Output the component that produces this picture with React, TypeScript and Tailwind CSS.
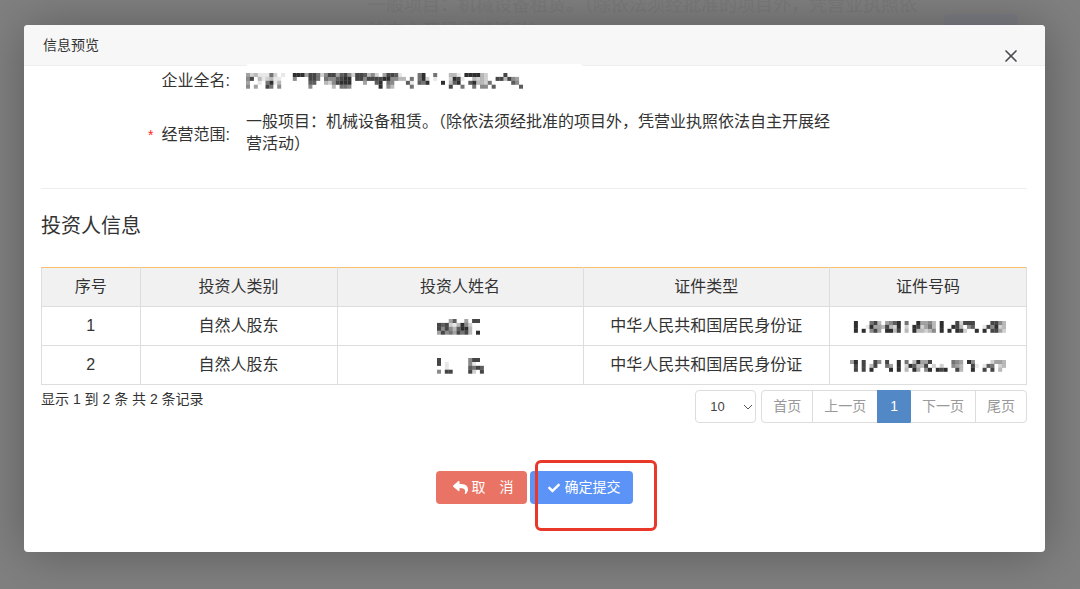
import { FaCheck, FaReply } from 'react-icons/fa';
import { X } from 'lucide-react';

// one digit per block, 0 is blank and 9 is darkest
const COMPANY = [
  '42311162010099948862588478528873520488710000690060003310999932000080000',
  '58031231100050008860655789908858888995533060692010002981003232008838540',
  '40010691300000007700325899900040079065000710769000903790079332600000750',
  '50400860500000005000003066500000009053000060000000008006006055070000007',
];

const INVESTORS = [
  {
    type: '自然人股东',
    name: ['000470040880', '878213952000', '858537993000', '485648683090'],
    idType: '中华人民共和国居民身份证',
    idNumber: [
      '0900068304579060094453090008288800008853',
      '0900194438329020982463090098305700185923',
      '0909058409938030933235090909820090908842',
    ],
  },
  {
    type: '自然人股东',
    name: ['800000005880', '801000005100', '001000007687', '508800008208'],
    idType: '中华人民共和国居民身份证',
    idNumber: [
      '4908008508009060394480000065409500002443',
      '0808038006409029733802020054300810176023',
      '0808090000909030940590989008300900808030',
    ],
  },
];

const COLUMNS = [
  { title: '序号', width: 'w-[10%]' },
  { title: '投资人类别', width: 'w-[20%]' },
  { title: '投资人姓名', width: 'w-[25%]' },
  { title: '证件类型', width: 'w-[25%]' },
  { title: '证件号码', width: 'w-[20%]' },
];

function Mosaic({ rows, label }: { rows: string[]; label: string }) {
  const cell = 3.9;
  const width = rows[0].length * cell;
  const height = rows.length * cell;
  return (
    <svg role="img" aria-label={label} width={width} height={height} className="inline-block">
      {rows.map((row, y) =>
        row.split('').map((value, x) =>
          value === '0' ? null : (
            <rect
              key={`${x}-${y}`}
              x={x * cell}
              y={y * cell}
              width={cell + 0.1}
              height={cell + 0.1}
              fill="#2f2f2f"
              opacity={Number(value) / 9}
            />
          )
        )
      )}
    </svg>
  );
}

function PageBehind() {
  return (
    <div aria-hidden="true" className="absolute inset-x-0 top-0">
      <div className="flex items-start pl-[368px] pr-[62px]">
        <p className="flex-1 -mt-2 text-[18px] leading-[26px] text-[#7a7a7a]">
          一般项目：机械设备租赁。（除依法须经批准的项目外，凭营业执照依
          <br />
          法自主开展经营活动）
        </p>
        <div className="mt-3.5 h-8 w-[74px] rounded bg-[#7c7c84]" />
      </div>
    </div>
  );
}

function InvestorTable() {
  return (
    <table className="w-full table-fixed border-collapse text-center text-[16px] leading-[22px]">
      <thead>
        <tr className="bg-[#f1f1f1]">
          {COLUMNS.map((col) => (
            <th key={col.title} className={`${col.width} h-[39px] border border-x-[#ddd] border-t-[#f9bf6c] border-b-[#ddd] font-normal`}>
              {col.title}
            </th>
          ))}
        </tr>
      </thead>
      <tbody>
        {INVESTORS.map((investor, i) => (
          <tr key={i}>
            <td className="h-[39px] border border-[#ddd]">{i + 1}</td>
            <td className="border border-[#ddd]">{investor.type}</td>
            <td className="border border-[#ddd]">
              <Mosaic rows={investor.name} label="投资人姓名" />
            </td>
            <td className="border border-[#ddd]">{investor.idType}</td>
            <td className="border border-[#ddd]">
              <Mosaic rows={investor.idNumber} label="证件号码" />
            </td>
          </tr>
        ))}
      </tbody>
    </table>
  );
}

function Pager() {
  return (
    <div className="flex items-start justify-between">
      <p className="mt-1 text-[14px] leading-5">显示 1 到 2 条 共 2 条记录</p>
      <div className="mt-[5px] flex gap-[5px] text-[14px]">
        <div className="relative">
          <select
            aria-label="每页条数"
            className="h-[33px] w-[61px] appearance-none rounded border border-[#ddd] bg-white pl-3.5 text-[13px] text-[#444]"
          >
            <option>10</option>
            <option>20</option>
            <option>50</option>
          </select>
          <svg viewBox="0 0 10 6" className="pointer-events-none absolute right-[3px] top-3.5 h-1.5 w-2.5" fill="none" stroke="#555">
            <path d="M1 1l4 4 4-4" />
          </svg>
        </div>
        <nav aria-label="分页" className="flex text-[#999]">
          <button className="h-[33px] rounded-l border border-[#ddd] px-[11px]">首页</button>
          <button className="-ml-px h-[33px] border border-[#ddd] px-[11px]">上一页</button>
          <button aria-current="page" className="-ml-px h-[33px] border border-[#5388c7] bg-[#5388c7] px-3 text-white">1</button>
          <button className="-ml-px h-[33px] border border-[#ddd] border-l-transparent px-[11px]">下一页</button>
          <button className="-ml-px h-[33px] rounded-r border border-[#ddd] px-[11px]">尾页</button>
        </nav>
      </div>
    </div>
  );
}

export default function App() {
  return (
    <div className="relative min-h-screen overflow-hidden bg-[#808080] pt-[25px] pr-[35px] pb-9 pl-6 font-['Liberation_Sans','Noto_Sans_CJK_SC',sans-serif] text-[#333]">
      <PageBehind />
      <div role="dialog" aria-labelledby="dialog-title" className="relative rounded-sm bg-white shadow-[1px_1px_50px_rgba(0,0,0,0.3)]">
        <header className="flex h-[41px] justify-between rounded-t-sm border-b border-[#eee] bg-[#f7f7f7] pr-6 pl-[19px]">
          <h1 id="dialog-title" className="text-[14px] leading-[40px]">信息预览</h1>
          <button aria-label="关闭" className="mt-[21px] h-5 w-5 text-[#4a4a50]">
            <X size={20} strokeWidth={2} />
          </button>
        </header>

        <main className="relative -mt-0.5 pr-[18px] pl-[17px] pb-12">
          <dl className="grid grid-cols-[189px_minmax(0,1fr)] gap-x-4 gap-y-[13px] border-b border-[#eee] pb-[33px] text-[16px] leading-[22px]">
            <dt className="self-center text-right">企业全名:</dt>
            <dd className="flex h-[34px] w-[337px] items-center rounded bg-white">
              <Mosaic rows={COMPANY} label="企业全名" />
            </dd>
            <dt className="flex items-center justify-end gap-2 pt-1">
              <span className="text-[14px] text-[#f22]">*</span>
              经营范围:
            </dt>
            <dd className="max-w-[592px]">
              一般项目：机械设备租赁。（除依法须经批准的项目外，凭营业执照依法自主开展经营活动）
            </dd>
          </dl>

          <h2 className="mt-[23px] mb-[27px] text-[20px] leading-7">投资人信息</h2>
          <InvestorTable />
          <Pager />

          <div className="mt-12 flex justify-center gap-[3px] text-[14px] text-white">
            <button className="flex h-[33px] items-center gap-1 rounded bg-[#e97465] pr-[13px] pl-[17px]">
              <FaReply size={15} />
              取　消
            </button>
            <div className="relative">
              <button className="flex h-[33px] items-center gap-[5px] rounded bg-[#5b93f7] pr-3 pl-[18px]">
                <FaCheck size={12} />
                确定提交
              </button>
              <div className="pointer-events-none absolute -top-[11px] left-[5px] h-[71px] w-[122px] rounded-md border-3 border-[#e9382a]" />
            </div>
          </div>
        </main>
      </div>
    </div>
  );
}
